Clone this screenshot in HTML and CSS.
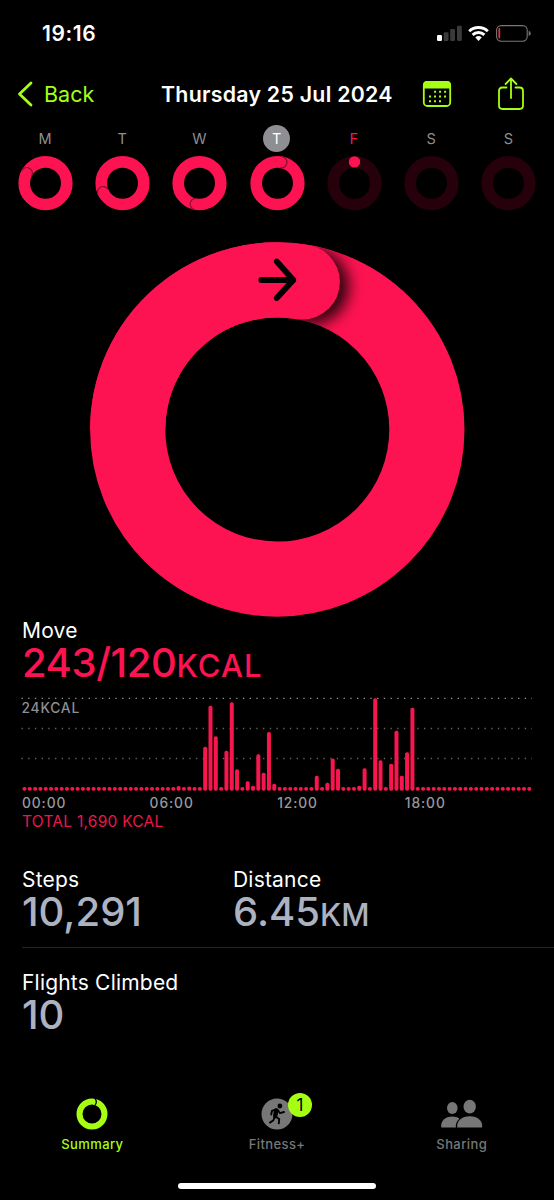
FILE: index.html
```
<!DOCTYPE html>
<html lang="en">
<head>
  <meta charset="UTF-8">
  <meta name="viewport" content="width=device-width, initial-scale=1">
  <title>Activity</title>
  <link rel="stylesheet" href="styles.css">
</head>
<body>
<div class="app">
  <div class="status">
    <span class="clock">19:16</span>
    <svg class="status-icons" width="96" height="20" viewBox="0 0 96 20">
      <rect x="1" y="11" width="5" height="6" rx="1.2" fill="#fff"/>
      <g fill="#3a3a3a">
        <rect x="7.7" y="8.2" width="4.8" height="8.8" rx="1.2"/>
        <rect x="14.2" y="5" width="4.8" height="12" rx="1.2"/>
        <rect x="21" y="1.8" width="4.8" height="15.2" rx="1.2"/>
      </g>
      <g fill="none" stroke="#fff" stroke-width="2.9">
        <path d="M33.2 7.2a13.5 13.5 0 0 1 18.6 0"/>
        <path d="M36.6 10.9a8.6 8.6 0 0 1 11.8 0"/>
      </g>
      <path d="M39.3 13.5a4.8 4.8 0 0 1 6.4 0L42.5 17z" fill="#fff"/>
      <rect x="60.6" y="1.6" width="30.6" height="15.6" rx="4.6" fill="none" stroke="#777" stroke-width="1.1"/>
      <rect x="62.4" y="4" width="1.8" height="10.5" rx=".9" fill="#e0323c"/>
      <path d="M92.7 6.8q2 .8 2 2.6t-2 2.6z" fill="#777"/>
    </svg>
  </div>

  <div class="nav">
    <svg class="chevron" width="16" height="26" viewBox="0 0 16 26"><path d="M14 2L2.5 13L14 24" fill="none" stroke="#a6ff12" stroke-width="2.8" stroke-linecap="round" stroke-linejoin="round"/></svg>
    <span class="back">Back</span>
    <span class="title">Thursday 25 Jul 2024</span>
    <svg class="calendar" width="30" height="28" viewBox="0 0 30 28">
      <rect x="1.8" y="2" width="26.4" height="24" rx="3.6" fill="none" stroke="#a6ff12" stroke-width="1.8"/>
      <path d="M1 8.4V5q0-4 4-4h20q4 0 4 4v3.4z" fill="#a6ff12"/>
      <path d="M12.1 11.8h12M7 16.5h17M7 21.2h12" stroke="#a6ff12" stroke-width="2" stroke-dasharray="2 3"/>
    </svg>
    <svg class="share" width="28" height="34" viewBox="0 0 28 34">
      <path d="M9.5 10.5H5.4q-3.4 0-3.4 3.4v14.7Q2 32 5.4 32h17.2q3.4 0 3.4-3.4V13.9q0-3.4-3.4-3.4h-4.1M14 21V1.8M8.6 7L14 1.5 19.4 7" fill="none" stroke="#a6ff12" stroke-width="1.8" stroke-linecap="round" stroke-linejoin="round"/>
    </svg>
  </div>

  <div class="week" id="week"></div>

  <svg class="ring" width="376" height="376" viewBox="-188.3 -188.5 376 376">
    <defs>
      <clipPath id="band"><path clip-rule="evenodd" d="M0-187.2A187.2 187.2 0 1 1 0 187.2 187.2 187.2 0 1 1 0-187.2ZM0-112A112 112 0 1 0 0 112 112 112 0 1 0 0-112Z"/></clipPath>
      <filter id="soft" x="-50%" y="-50%" width="200%" height="200%"><feGaussianBlur stdDeviation="7.5"/></filter>
    </defs>
    <circle r="149.6" fill="none" stroke="#fe1352" stroke-width="75.2"/>
    <g clip-path="url(#band)"><circle cx="33.5" cy="-143" r="38" fill="#000" opacity=".85" filter="url(#soft)"/></g>
    <path d="M-149.6 0A149.6 149.6 0 0 1 25-147.5" fill="none" stroke="#fe1352" stroke-width="75.2"/>
    <circle cx="25" cy="-147.5" r="37.6" fill="#fe1352"/>
    <path d="M-16-149.5H16M-.5-168L16-149.5-.5-131.5" fill="none" stroke="#000" stroke-width="5.8" stroke-linecap="round" stroke-linejoin="round"/>
  </svg>

  <div class="move">
    <div class="label">Move</div>
    <div class="value pink"><span class="num-move">243/120</span><span class="unit kcal">KCAL</span></div>
  </div>

  <svg class="chart" id="chart" width="554" height="104" viewBox="0 0 554 104">
    <g stroke-width="1.3" stroke-dasharray="1.3 5.41">
      <path d="M21.5 8.3H532" stroke="#999"/>
      <path d="M21.5 38.5H532" stroke="#666"/>
      <path d="M21.5 68.5H532" stroke="#666"/>
    </g>
    <text x="21.5" y="22.8" class="scale">24KCAL</text>
  </svg>
  <div class="hours"><span>00:00</span><span>06:00</span><span>12:00</span><span>18:00</span></div>
  <div class="total">TOTAL 1,690 KCAL</div>

  <div class="stats">
    <div class="stat">
      <div class="label">Steps</div>
      <div class="value">10,291</div>
    </div>
    <div class="stat">
      <div class="label">Distance</div>
      <div class="value"><span>6.45</span><span class="unit">KM</span></div>
    </div>
  </div>
  <div class="stats flights">
    <div class="stat">
      <div class="label">Flights Climbed</div>
      <div class="value">10</div>
    </div>
  </div>

  <div class="tabs">
    <div class="tab active">
      <svg width="34" height="34" viewBox="-17 -17 34 34">
        <circle r="12.5" fill="none" stroke="#a6ff12" stroke-width="6"/>
        <path d="M2-16.5q4 3.5 1.2 7.5" fill="none" stroke="#000" stroke-width="1.3"/>
      </svg>
      <span>Summary</span>
    </div>
    <div class="tab">
      <svg width="34" height="34" viewBox="-17 -17 34 34">
        <circle r="15.5" fill="#777"/>
        <circle cx="2.9" cy="-8" r="2.4"/>
        <path d="M-.8-3.6L-1.8 2.2" stroke="#000" stroke-width="4.4" stroke-linecap="round"/>
        <path d="M-1-4.6L-5-3.2-5.8.5M.6-4.2L3-.8 7-2M-1.2 2.8L2.2 5 1.8 9.4M-2.4 2.8L-3.6 6.2-7 8.6" fill="none" stroke="#000" stroke-width="1.9" stroke-linecap="round" stroke-linejoin="round"/>
      </svg>
      <b class="badge">1</b>
      <span>Fitness+</span>
    </div>
    <div class="tab">
      <svg width="44" height="34" viewBox=".7 0 44 34">
        <g fill="#777">
          <ellipse cx="13" cy="11" rx="5.3" ry="6"/>
          <path d="M2 30.5C1 24 6 19.5 13 19.5c3 0 5.5.8 7.3 2.2C17.5 24 16 27 16.6 30.5z"/>
          <ellipse cx="30.4" cy="9.7" rx="6.2" ry="6.9"/>
          <path d="M18 30.5C17 24 22.5 19.3 30.4 19.3S43.8 24 42.8 30.5z"/>
        </g>
      </svg>
      <span>Sharing</span>
    </div>
  </div>
  <div class="home"></div>
</div>

<script>
// angle = where the end of the move ring sits, clockwise from the top
const days = [
  { name: 'M', angle: 298 },
  { name: 'T', angle: 245 },
  { name: 'W', angle: 190 },
  { name: 'T', angle: 10, selected: true },
  { name: 'F', today: true },
  { name: 'S' },
  { name: 'S' }
];

document.getElementById('week').innerHTML = days.map(d => {
  let art = `<circle r="21.3" fill="none" stroke="${d.angle ? '#fe1352' : '#26000b'}" stroke-width="11.6"/>`;
  if (d.angle) {
    art += `<g transform="rotate(${d.angle})"><path d="M0-27A5.7 5.7 0 0 1 0-15.6" fill="none" stroke="#8d0c31" stroke-width="1.2"/></g>`;
  }
  if (d.today) art += '<circle cy="-21.3" r="5.7" fill="#fe1352"/>';
  const cls = d.selected ? 'selected' : d.today ? 'today' : '';
  return `<div class="day"><span class="${cls}">${d.name}</span><svg width="56" height="56" viewBox="-28.5 -28.2 56 56">${art}</svg></div>`;
}).join('');

// bar heights per quarter of an hour, the rest are empty
const bars = {
  29: 4.7, 31: 4.4, 34: 44, 35: 85, 36: 54.5, 38: 40, 39: 88.5, 40: 21.5, 42: 9.5, 43: 5,
  44: 36.5, 45: 18, 46: 58.7, 47: 7, 55: 15, 57: 8, 58: 32.3, 59: 22, 63: 5, 64: 22.5,
  66: 92.5, 67: 30.5, 69: 27, 70: 60, 71: 15, 72: 38.5, 73: 83
};
let out = '';
for (let i = 0; i < 96; i++) {
  const h = bars[i] || 3.8;
  out += `<rect x="${(22.5 + i * 5.314).toFixed(2)}" y="${(100.8 - h).toFixed(1)}" width="4" height="${h}" rx="1.7"/>`;
}
document.getElementById('chart').insertAdjacentHTML('beforeend', `<g fill="#f8164f">${out}</g>`);
</script>
</body>
</html>
```
FILE: styles.css
```
* { box-sizing: border-box; }
body { margin: 0; background: #000; color: #fff; font-family: Inter, "Liberation Sans", sans-serif; }
svg { display: block; }
.app { width: 554px; height: 1200px; overflow: hidden; display: flex; flex-direction: column; }

.status { height: 67px; padding: 0 22px 0 42px; display: flex; align-items: center; justify-content: space-between; }
.clock { font-size: 21px; font-weight: 600; letter-spacing: .6px; }

.nav { height: 54px; padding-left: 17px; display: flex; align-items: center; color: #a6ff12; font-size: 21.5px; white-space: nowrap; }
.back { width: 117px; margin-left: 11px; }
.title { width: 232px; color: #fff; font-size: 21.3px; font-weight: 600; letter-spacing: .28px; }
.calendar { margin-left: 29px; }
.share { margin-left: 45px; margin-top: -1px; }

.week { width: 540.4px; margin-left: 6.5px; display: grid; grid-template-columns: repeat(7, 1fr); }
.day { display: flex; flex-direction: column; align-items: center; }
.day span { width: 27px; height: 27px; margin: 4px 0 3px; border-radius: 50%; line-height: 27px; text-align: center; font-size: 14.5px; color: #8e8e93; }
.day .selected { background: #8e8e93; color: #fff; }
.day .today { color: #fe1352; }

.ring { margin: 30px 0 0 89px; flex: none; }

.label { height: 25px; line-height: 26px; font-size: 21px; letter-spacing: .2px; }
.value { height: 41px; line-height: 40px; font-size: 40px; font-weight: 500; color: #adb2c0; white-space: nowrap; }
.unit { font-size: 31px; }
.pink { color: #fe1352; }
.num-move { letter-spacing: -.4px; }
.kcal { letter-spacing: 1.1px; }
.move { padding: 1px 0 0 22px; }

.chart { margin-top: 6px; flex: none; }
.scale { font-size: 13.8px; font-weight: 500; letter-spacing: .8px; fill: #8e8e93; }
.hours { height: 18px; padding-left: 22px; display: grid; grid-template-columns: repeat(4, 127.6px); line-height: 18px; font-size: 13.8px; font-weight: 500; letter-spacing: .9px; color: #98989d; }
.total { height: 18px; line-height: 20px; padding-left: 22px; font-size: 15.5px; letter-spacing: .25px; color: #e9184c; }

.stats { margin: 37px 0 0 22px; height: 81px; display: flex; border-bottom: 1px solid #262626; }
.stat { width: 211px; }
.flights { margin-top: 22px; border: 0; }

.tabs { margin: 46px 0 0; height: 60px; display: grid; grid-template-columns: repeat(3, 184.7px); }
.tab { position: relative; display: flex; flex-direction: column; align-items: center; font-size: 13px; font-weight: 500; letter-spacing: .4px; color: #777; }
.tab span { line-height: 18px; margin-top: 4px; }
.active { color: #a6ff12; }
.badge { position: absolute; left: 103.5px; top: -4px; width: 24px; height: 24px; border-radius: 50%; background: #a6ff12; color: #000; font-size: 17px; font-weight: 400; line-height: 24px; text-align: center; }
.home { width: 198px; height: 6px; margin: 26px 0 0 178px; border-radius: 3px; background: #fff; }
```
